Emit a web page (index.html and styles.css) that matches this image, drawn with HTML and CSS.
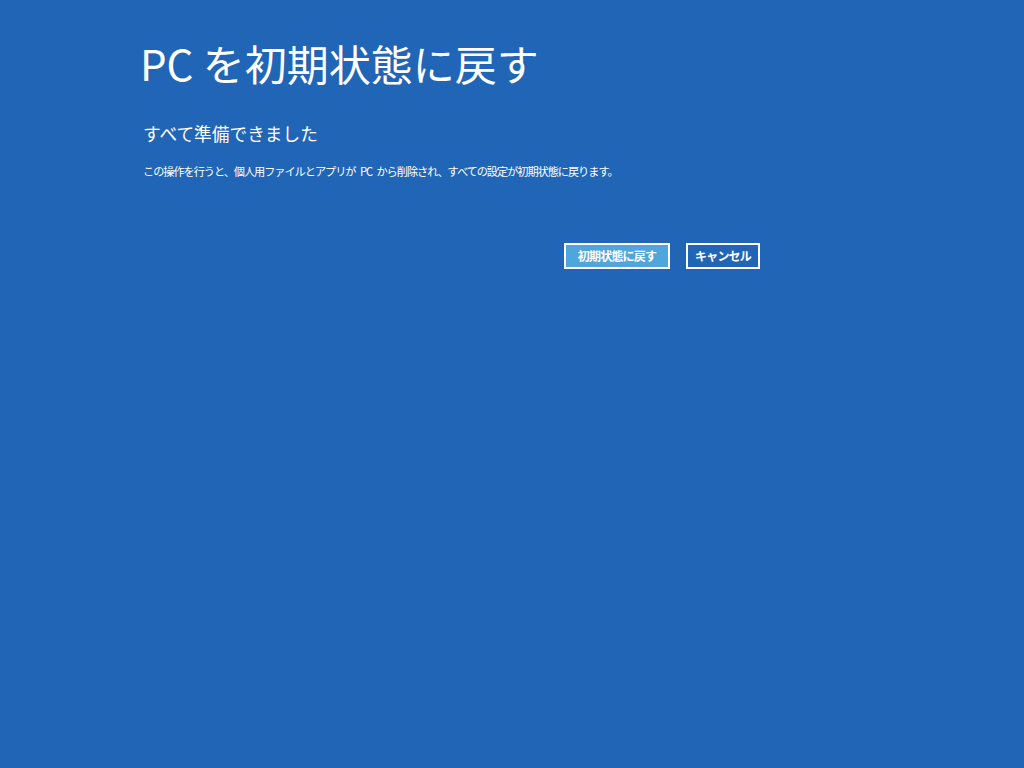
FILE: index.html
```html
<!DOCTYPE html>
<html lang="ja">
<head>
<meta charset="utf-8">
<link rel="stylesheet" href="styles.css">
</head>
<body>
<div class="page">
  <h1 class="title">PC を初期状態に戻す</h1>
  <h2 class="subtitle">すべて準備できました</h2>
  <p class="desc">この操作を行うと、個人用ファイルとアプリが PC から削除され、すべての設定が初期状態に戻ります。</p>
  <div class="actions">
    <button class="btn btn-primary">初期状態に戻す</button>
    <button class="btn btn-cancel">キャンセル</button>
  </div>
</div>
</body>
</html>
```
FILE: styles.css
```css
html, body {
  margin: 0;
  padding: 0;
  width: 1024px;
  height: 768px;
  background: #2166b6;
  overflow: hidden;
}
body {
  font-family: "Noto Sans CJK JP", "Noto Sans", sans-serif;
  color: #ffffff;
}
.page {
  width: 620px;
  padding: 34px 0 0 140px;
}
.title {
  margin: 0;
  font-size: 42px;
  font-weight: 400;
  line-height: 58px;
}
.subtitle {
  margin: 29px 0 0 3px;
  font-size: 17.7px;
  font-weight: 400;
  line-height: 24px;
}
.desc {
  margin: 18px 0 0 3px;
  font-size: 11.2px;
  line-height: 16px;
  letter-spacing: -1.05px;
  word-spacing: 3px;
}
.actions {
  display: flex;
  justify-content: flex-end;
  gap: 16px;
  margin-top: 64px;
}
.btn {
  height: 26px;
  box-sizing: border-box;
  border: 2px solid #ffffff;
  background: #2166b6;
  color: #ffffff;
  font-family: "Noto Sans CJK JP", sans-serif;
  font-size: 12px;
  font-weight: 700;
  padding: 0;
  letter-spacing: -0.8px;
  line-height: 20px;
  text-align: center;
}
.btn-primary {
  width: 106px;
  background: #4ea6dc;
}
.btn-cancel {
  width: 74px;
}
```
